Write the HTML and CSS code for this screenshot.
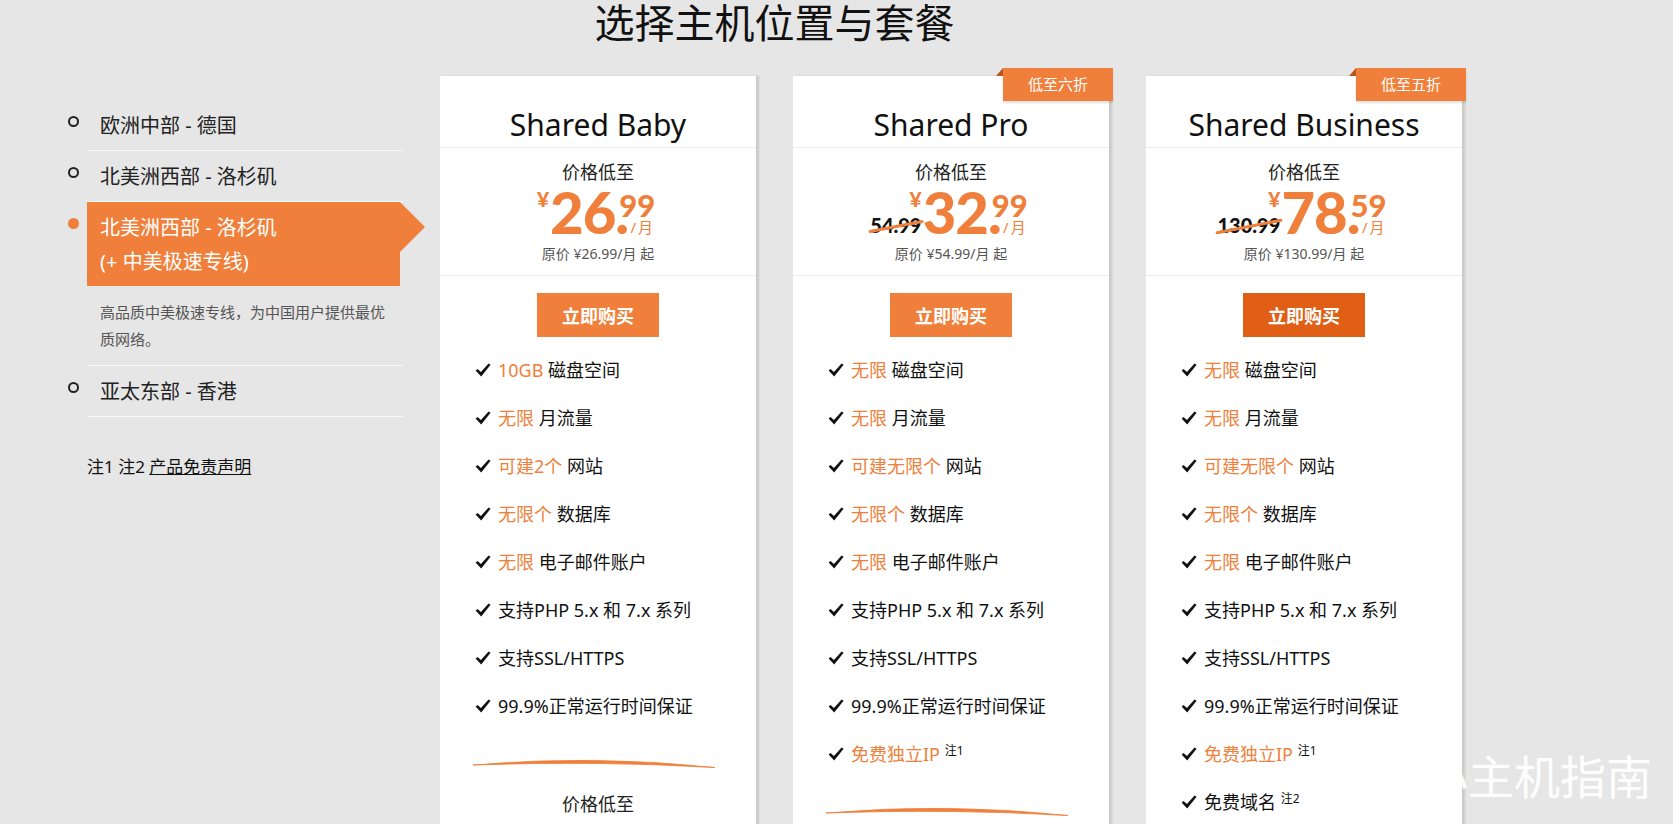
FILE: index.html
```html
<!DOCTYPE html>
<html lang="zh-CN">
<head>
<meta charset="utf-8">
<title>选择主机位置与套餐</title>
<link rel="stylesheet" href="styles.css">
</head>
<body>
<div class="page">
  <h1 class="page-title">选择主机位置与套餐</h1>
  <div class="layout">
    <aside class="sidebar">
      <ul class="regions">
        <li class="region"><span class="region-name">欧洲中部 - 德国</span></li>
        <li class="region"><span class="region-name">北美洲西部 - 洛杉矶</span></li>
        <li class="region active">
          <div class="region-box">北美洲西部 - 洛杉矶<br>(+ 中美极速专线)</div>
          <p class="region-desc">高品质中美极速专线，为中国用户提供最优质网络。</p>
        </li>
        <li class="region"><span class="region-name">亚太东部 - 香港</span></li>
      </ul>
      <div class="notes">注1 注2 <a class="notes-link">产品免责声明</a></div>
    </aside>

    <section class="plan">
      <h2 class="plan-head">Shared Baby</h2>
      <div class="plan-price">
        <div class="from">价格低至</div>
        <div class="price">
          <span class="yen">¥</span><span class="int">26.</span><span class="dec"><span class="cents">99</span><span class="per">/月</span></span>
        </div>
        <div class="orig">原价 ¥26.99/月 起</div>
      </div>
      <div class="plan-buy"><a class="buy">立即购买</a></div>
      <ul class="features">
        <li class="feature"><svg class="check" viewBox="0 0 16 14"><path d="M0.6 7.6 L2.6 5.9 L5.9 9.1 L13.6 0.4 L15.6 1.8 L6.2 13.6 Z"/></svg><span><em>10GB</em> 磁盘空间</span></li>
        <li class="feature"><svg class="check" viewBox="0 0 16 14"><path d="M0.6 7.6 L2.6 5.9 L5.9 9.1 L13.6 0.4 L15.6 1.8 L6.2 13.6 Z"/></svg><span><em>无限</em> 月流量</span></li>
        <li class="feature"><svg class="check" viewBox="0 0 16 14"><path d="M0.6 7.6 L2.6 5.9 L5.9 9.1 L13.6 0.4 L15.6 1.8 L6.2 13.6 Z"/></svg><span><em>可建2个</em> 网站</span></li>
        <li class="feature"><svg class="check" viewBox="0 0 16 14"><path d="M0.6 7.6 L2.6 5.9 L5.9 9.1 L13.6 0.4 L15.6 1.8 L6.2 13.6 Z"/></svg><span><em>无限个</em> 数据库</span></li>
        <li class="feature"><svg class="check" viewBox="0 0 16 14"><path d="M0.6 7.6 L2.6 5.9 L5.9 9.1 L13.6 0.4 L15.6 1.8 L6.2 13.6 Z"/></svg><span><em>无限</em> 电子邮件账户</span></li>
        <li class="feature"><svg class="check" viewBox="0 0 16 14"><path d="M0.6 7.6 L2.6 5.9 L5.9 9.1 L13.6 0.4 L15.6 1.8 L6.2 13.6 Z"/></svg><span>支持PHP 5.x 和 7.x 系列</span></li>
        <li class="feature"><svg class="check" viewBox="0 0 16 14"><path d="M0.6 7.6 L2.6 5.9 L5.9 9.1 L13.6 0.4 L15.6 1.8 L6.2 13.6 Z"/></svg><span>支持SSL/HTTPS</span></li>
        <li class="feature"><svg class="check" viewBox="0 0 16 14"><path d="M0.6 7.6 L2.6 5.9 L5.9 9.1 L13.6 0.4 L15.6 1.8 L6.2 13.6 Z"/></svg><span>99.9%正常运行时间保证</span></li>
      </ul>
      <svg class="curve" viewBox="0 0 244 12"><path d="M1 7 Q122 -3.5 243 9.5 Q122 2.5 1 7 Z"/></svg>
      <div class="from from-more">价格低至</div>
    </section>

    <section class="plan">
      <div class="ribbon">低至六折</div>
      <h2 class="plan-head">Shared Pro</h2>
      <div class="plan-price">
        <div class="from">价格低至</div>
        <div class="price">
          <span class="old">54.99</span><span class="yen">¥</span><span class="int">32.</span><span class="dec"><span class="cents">99</span><span class="per">/月</span></span>
        </div>
        <div class="orig">原价 ¥54.99/月 起</div>
      </div>
      <div class="plan-buy"><a class="buy">立即购买</a></div>
      <ul class="features">
        <li class="feature"><svg class="check" viewBox="0 0 16 14"><path d="M0.6 7.6 L2.6 5.9 L5.9 9.1 L13.6 0.4 L15.6 1.8 L6.2 13.6 Z"/></svg><span><em>无限</em> 磁盘空间</span></li>
        <li class="feature"><svg class="check" viewBox="0 0 16 14"><path d="M0.6 7.6 L2.6 5.9 L5.9 9.1 L13.6 0.4 L15.6 1.8 L6.2 13.6 Z"/></svg><span><em>无限</em> 月流量</span></li>
        <li class="feature"><svg class="check" viewBox="0 0 16 14"><path d="M0.6 7.6 L2.6 5.9 L5.9 9.1 L13.6 0.4 L15.6 1.8 L6.2 13.6 Z"/></svg><span><em>可建无限个</em> 网站</span></li>
        <li class="feature"><svg class="check" viewBox="0 0 16 14"><path d="M0.6 7.6 L2.6 5.9 L5.9 9.1 L13.6 0.4 L15.6 1.8 L6.2 13.6 Z"/></svg><span><em>无限个</em> 数据库</span></li>
        <li class="feature"><svg class="check" viewBox="0 0 16 14"><path d="M0.6 7.6 L2.6 5.9 L5.9 9.1 L13.6 0.4 L15.6 1.8 L6.2 13.6 Z"/></svg><span><em>无限</em> 电子邮件账户</span></li>
        <li class="feature"><svg class="check" viewBox="0 0 16 14"><path d="M0.6 7.6 L2.6 5.9 L5.9 9.1 L13.6 0.4 L15.6 1.8 L6.2 13.6 Z"/></svg><span>支持PHP 5.x 和 7.x 系列</span></li>
        <li class="feature"><svg class="check" viewBox="0 0 16 14"><path d="M0.6 7.6 L2.6 5.9 L5.9 9.1 L13.6 0.4 L15.6 1.8 L6.2 13.6 Z"/></svg><span>支持SSL/HTTPS</span></li>
        <li class="feature"><svg class="check" viewBox="0 0 16 14"><path d="M0.6 7.6 L2.6 5.9 L5.9 9.1 L13.6 0.4 L15.6 1.8 L6.2 13.6 Z"/></svg><span>99.9%正常运行时间保证</span></li>
        <li class="feature"><svg class="check" viewBox="0 0 16 14"><path d="M0.6 7.6 L2.6 5.9 L5.9 9.1 L13.6 0.4 L15.6 1.8 L6.2 13.6 Z"/></svg><span><em>免费独立IP</em> <sup class="note">注1</sup></span></li>
      </ul>
      <svg class="curve" viewBox="0 0 244 12"><path d="M1 7 Q122 -3.5 243 9.5 Q122 2.5 1 7 Z"/></svg>
    </section>

    <section class="plan">
      <div class="ribbon">低至五折</div>
      <h2 class="plan-head">Shared Business</h2>
      <div class="plan-price">
        <div class="from">价格低至</div>
        <div class="price">
          <span class="old">130.99</span><span class="yen">¥</span><span class="int">78.</span><span class="dec"><span class="cents">59</span><span class="per">/月</span></span>
        </div>
        <div class="orig">原价 ¥130.99/月 起</div>
      </div>
      <div class="plan-buy"><a class="buy buy-dark">立即购买</a></div>
      <ul class="features">
        <li class="feature"><svg class="check" viewBox="0 0 16 14"><path d="M0.6 7.6 L2.6 5.9 L5.9 9.1 L13.6 0.4 L15.6 1.8 L6.2 13.6 Z"/></svg><span><em>无限</em> 磁盘空间</span></li>
        <li class="feature"><svg class="check" viewBox="0 0 16 14"><path d="M0.6 7.6 L2.6 5.9 L5.9 9.1 L13.6 0.4 L15.6 1.8 L6.2 13.6 Z"/></svg><span><em>无限</em> 月流量</span></li>
        <li class="feature"><svg class="check" viewBox="0 0 16 14"><path d="M0.6 7.6 L2.6 5.9 L5.9 9.1 L13.6 0.4 L15.6 1.8 L6.2 13.6 Z"/></svg><span><em>可建无限个</em> 网站</span></li>
        <li class="feature"><svg class="check" viewBox="0 0 16 14"><path d="M0.6 7.6 L2.6 5.9 L5.9 9.1 L13.6 0.4 L15.6 1.8 L6.2 13.6 Z"/></svg><span><em>无限个</em> 数据库</span></li>
        <li class="feature"><svg class="check" viewBox="0 0 16 14"><path d="M0.6 7.6 L2.6 5.9 L5.9 9.1 L13.6 0.4 L15.6 1.8 L6.2 13.6 Z"/></svg><span><em>无限</em> 电子邮件账户</span></li>
        <li class="feature"><svg class="check" viewBox="0 0 16 14"><path d="M0.6 7.6 L2.6 5.9 L5.9 9.1 L13.6 0.4 L15.6 1.8 L6.2 13.6 Z"/></svg><span>支持PHP 5.x 和 7.x 系列</span></li>
        <li class="feature"><svg class="check" viewBox="0 0 16 14"><path d="M0.6 7.6 L2.6 5.9 L5.9 9.1 L13.6 0.4 L15.6 1.8 L6.2 13.6 Z"/></svg><span>支持SSL/HTTPS</span></li>
        <li class="feature"><svg class="check" viewBox="0 0 16 14"><path d="M0.6 7.6 L2.6 5.9 L5.9 9.1 L13.6 0.4 L15.6 1.8 L6.2 13.6 Z"/></svg><span>99.9%正常运行时间保证</span></li>
        <li class="feature"><svg class="check" viewBox="0 0 16 14"><path d="M0.6 7.6 L2.6 5.9 L5.9 9.1 L13.6 0.4 L15.6 1.8 L6.2 13.6 Z"/></svg><span><em>免费独立IP</em> <sup class="note">注1</sup></span></li>
        <li class="feature"><svg class="check" viewBox="0 0 16 14"><path d="M0.6 7.6 L2.6 5.9 L5.9 9.1 L13.6 0.4 L15.6 1.8 L6.2 13.6 Z"/></svg><span>免费域名 <sup class="note">注2</sup></span></li>
      </ul>
    </section>
  </div>
</div>
<div class="watermark">小主机指南</div>
</body>
</html>
```

FILE: styles.css
```css
html, body {
  margin: 0;
  padding: 0;
}
body {
  background: #e6e6e6;
  font-family: "Noto Sans", "Noto Sans CJK SC", sans-serif;
  color: #111;
  height: 824px;
  overflow: hidden;
}

.page {
  margin-left: 87px;
  width: 1375px;
}

.page-title {
  margin: 0;
  padding-top: 1px;
  font-size: 40px;
  font-weight: 400;
  line-height: 44px;
  text-align: center;
  color: #111;
}

.layout {
  display: flex;
  align-items: flex-start;
  gap: 37px;
  margin-top: 31px;
}

/* ---------- sidebar ---------- */
.sidebar {
  width: 316px;
  flex: none;
  padding-top: 24px;
}
.regions {
  list-style: none;
  margin: 0;
  padding: 0;
}
.region {
  position: relative;
  border-bottom: 1px solid #fafafa;
  font-size: 20px;
  color: #222;
}
.region::before {
  content: "";
  position: absolute;
  left: -19px;
  top: 16px;
  width: 7px;
  height: 7px;
  border: 2px solid #222;
  border-radius: 50%;
}
.region-name {
  display: block;
  padding: 1px 13px 0;
  line-height: 49px;
}
.region.active::before {
  width: 11px;
  height: 11px;
  border: 0;
  background: #ef7f3a;
}
.region-box {
  position: relative;
  width: 313px;
  box-sizing: border-box;
  padding: 9px 13px 7px;
  line-height: 34px;
  background: #ef7f3a;
  color: #fff;
}
.region-box::after {
  content: "";
  position: absolute;
  left: 100%;
  top: 0;
  border-left: 25px solid #ef7f3a;
  border-top: 25px solid transparent;
  border-bottom: 25px solid transparent;
}
.region-desc {
  margin: 0;
  padding: 13px 13px 12px;
  font-size: 15px;
  line-height: 27px;
  color: #555;
}
.notes {
  margin-top: 38px;
  font-size: 17px;
  line-height: 24px;
  color: #111;
}
.notes-link {
  color: #111;
  text-decoration: underline;
}

/* ---------- plans ---------- */
.plan {
  position: relative;
  width: 316px;
  flex: none;
  height: 900px;
  background: #fff;
  box-shadow: 3px 0 2px rgba(0, 0, 0, 0.12);
}
.plan-head {
  margin: 0;
  padding: 29px 0 2px;
  font-size: 30px;
  font-weight: 400;
  line-height: 40px;
  text-align: center;
  color: #111;
  border-bottom: 1px solid #ececec;
}
.plan-price {
  padding: 12px 0 11px;
  text-align: center;
  border-bottom: 1px solid #ececec;
}
.from {
  font-size: 18px;
  line-height: 24px;
  color: #222;
  text-align: center;
}
.price {
  display: flex;
  justify-content: center;
  align-items: flex-start;
  height: 41px;
  margin-top: 9px;
  margin-left: -4px;
  color: #ef7f3a;
  font-family: "Lato", sans-serif;
  font-weight: 900;
}
.old {
  position: relative;
  margin-top: 22px;
  margin-right: -12px;
  font-size: 20px;
  line-height: 20px;
  color: #111;
}
.old::after {
  content: "";
  position: absolute;
  left: -2px;
  right: -3px;
  top: 10px;
  height: 2.5px;
  border-radius: 2px;
  background: #ef7f3a;
  transform: rotate(-11deg);
}
.yen {
  position: relative;
  font-size: 21px;
  line-height: 20px;
  margin-top: -4px;
  margin-right: 1px;
}
.int {
  font-size: 58px;
  line-height: 38px;
  letter-spacing: -1px;
}
.dec {
  display: flex;
  flex-direction: column;
  margin-left: -9px;
}
.cents {
  font-size: 31px;
  line-height: 27px;
  margin-top: -1px;
}
.per {
  font-family: "Noto Sans", "Noto Sans CJK SC", sans-serif;
  font-weight: 400;
  font-size: 15px;
  line-height: 16px;
  letter-spacing: 2px;
  text-align: right;
}
.orig {
  margin-top: 10px;
  font-size: 14px;
  line-height: 20px;
  color: #555;
}
.plan-buy {
  display: flex;
  justify-content: center;
  padding-top: 17px;
}
.buy {
  display: flex;
  align-items: center;
  justify-content: center;
  width: 122px;
  height: 44px;
  background: #ef7f3a;
  color: #fff;
  font-size: 18px;
  font-weight: 700;
}
.buy-dark {
  background: #e05e16;
}
.features {
  list-style: none;
  margin: 0;
  padding: 8px 0 0 35px;
}
.feature {
  display: flex;
  align-items: center;
  height: 48px;
  font-size: 18px;
  color: #111;
}
.feature em {
  font-style: normal;
  color: #ef7f3a;
}
.check {
  flex: none;
  width: 16px;
  height: 14px;
  margin: 2px 7px 0 0;
  fill: #111;
}
.note {
  font-size: 12px;
  color: #111;
  vertical-align: 6px;
  line-height: 0;
}
.curve {
  display: block;
  width: 244px;
  height: 12px;
  margin: 29px 0 0 32px;
  fill: #ef7f3a;
  stroke: #ef7f3a;
  stroke-width: 0.8;
}
.from-more {
  margin-top: 22px;
}

.ribbon {
  position: absolute;
  top: -8px;
  right: -4px;
  width: 110px;
  height: 33px;
  line-height: 33px;
  background: #ef7f3a;
  color: #fff;
  font-size: 15px;
  text-align: center;
  box-shadow: 0 2px 2px rgba(0, 0, 0, 0.12);
}
.ribbon::before {
  content: "";
  position: absolute;
  left: -7px;
  top: 0;
  width: 0;
  height: 0;
  border-left: 7px solid transparent;
  border-bottom: 8px solid #b6561c;
}

.watermark {
  position: absolute;
  left: 1422px;
  top: 752px;
  font-size: 46px;
  line-height: 48px;
  color: rgba(255, 255, 255, 0.95);
  white-space: nowrap;
  pointer-events: none;
}
```
